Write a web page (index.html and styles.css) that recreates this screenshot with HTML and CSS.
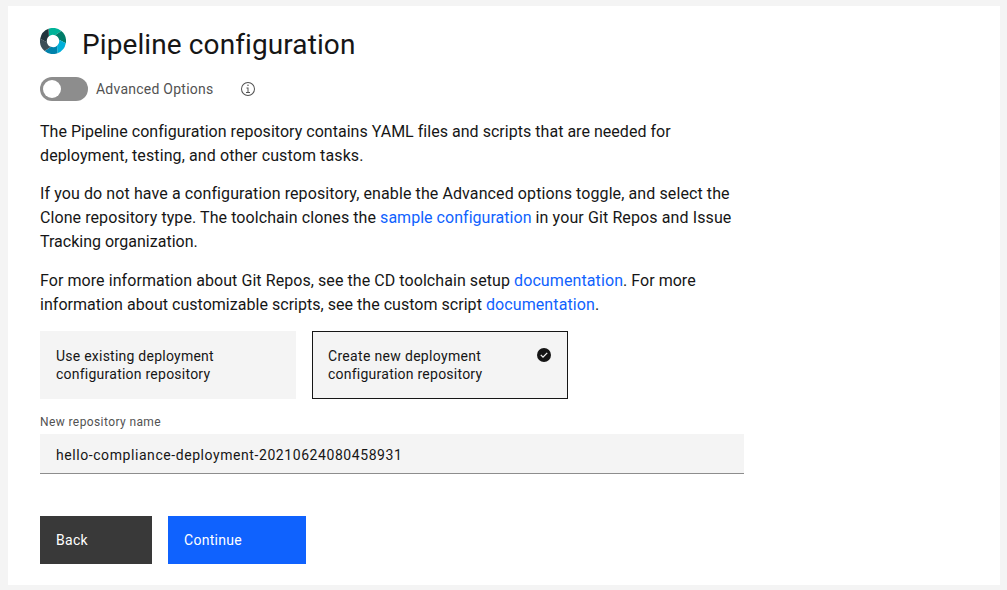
FILE: index.html
```
<!DOCTYPE html>
<html lang="en">
<head>
<meta charset="utf-8">
<title>Pipeline configuration</title>
<link rel="stylesheet" href="styles.css">
</head>
<body>
<main class="card">
  <header class="header">
    <svg class="logo" width="26" height="26" viewBox="-13 -13 26 26" aria-hidden="true">
      <path fill="#00b398" d="M-4.07-4.68L-4.45-12.22A13 13 0 0 1 8.36-9.96L2.02-5.86A6.2 6.2 0 0 0-4.07-4.68Z"/>
      <path fill="#007d69" d="M2.02-5.86L8.36-9.96A13 13 0 0 1 12.8 2.26L6.09-1.18A6.2 6.2 0 0 0 2.02-5.86Z"/>
      <path fill="#00b0da" d="M6.09-1.18L12.8 2.26A13 13 0 0 1 4.45 12.22L4.07 4.68A6.2 6.2 0 0 0 6.09-1.18Z"/>
      <path fill="#0082ab" d="M4.07 4.68L4.45 12.22A13 13 0 0 1-8.36 9.96L-2.02 5.86A6.2 6.2 0 0 0 4.07 4.68Z"/>
      <path fill="#3c4d56" d="M-2.02 5.86L-8.36 9.96A13 13 0 0 1-12.8-2.26L-6.09 1.18A6.2 6.2 0 0 0-2.02 5.86Z"/>
      <path fill="#22343d" d="M-6.09 1.18L-12.8-2.26A13 13 0 0 1-4.45-12.22L-4.07-4.68A6.2 6.2 0 0 0-6.09 1.18Z"/>
    </svg>
    <h1 class="title">Pipeline configuration</h1>
  </header>

  <div class="options">
    <button class="toggle" role="switch" aria-checked="false" aria-label="Advanced Options"><span class="knob"></span></button>
    <span class="options-label">Advanced Options</span>
    <svg class="info" width="16" height="16" viewBox="0 0 32 32" fill="#525252" aria-hidden="true">
      <path d="M17 22V13H13V15H15V22H12V24H20V22ZM16 7A1.5 1.5 0 1 0 17.5 8.5 1.5 1.5 0 0 0 16 7Z"/>
      <path d="M16 30A14 14 0 1 1 30 16 14 14 0 0 1 16 30ZM16 4A12 12 0 1 0 28 16 12 12 0 0 0 16 4Z"/>
    </svg>
  </div>

  <div class="copy">
    <p><span class="line ls-3">The Pipeline configuration repository contains YAML files and scripts that are needed for</span>
    <span class="line ls-11">deployment, testing, and other custom tasks.</span></p>
    <p><span class="line ls-10">If you do not have a configuration repository, enable the Advanced options toggle, and select the</span>
    <span class="line ls-8">Clone repository type. The toolchain clones the <a class="link ls-3" href="#">sample configuration</a><span class="ls-11"> in your Git Repos and Issue</span></span>
    <span class="line">Tracking organization.</span></p>
    <p><span class="line ls-7">For more information about Git Repos, see the CD toolchain setup <a class="link ls-10" href="#">documentation</a><span class="ls-3">. For more</span></span>
    <span class="line ls-3">information about customizable scripts, see the custom script <a class="link ls-10" href="#">documentation</a>.</span></p>
  </div>

  <div class="tiles">
    <div class="tile">Use existing deployment<br>configuration repository</div>
    <div class="tile selected"><span><span class="create">Create new deployment</span><br>configuration repository</span>
      <svg class="check" width="16" height="16" viewBox="0 0 16 16" aria-hidden="true">
        <circle cx="8" cy="8" r="7" fill="#161616"/>
        <path fill="#f4f4f4" d="M7 11L4.3 8.3 5.2 7.4 7 9.2 10.8 5.4 11.7 6.3Z"/>
      </svg>
    </div>
  </div>

  <label class="field-label" for="repo">New repository name</label>
  <input class="field" id="repo" type="text" value="hello-compliance-deployment-20210624080458931">

  <div class="actions">
    <button class="button back">Back</button>
    <button class="button continue">Continue</button>
  </div>
</main>
</body>
</html>
```

FILE: styles.css
```
* { box-sizing: border-box; }

body {
  margin: 0;
  padding: 6px 7px 5px 8px;
  height: 590px;
  background: #f4f4f4;
  color: #161616;
  font-family: Roboto, "Noto Sans", sans-serif;
  font-size: 16px;
  line-height: 24px;
}

.card {
  height: 579px;
  padding: 20px 32px 0;
  background: #fff;
}

.header { display: flex; gap: 16px; height: 51px; }
.logo { margin-top: 2px; }
.title { margin: 1px 0 0; font-size: 28px; font-weight: 400; line-height: 36px; letter-spacing: 0.1px; }

.options { display: flex; align-items: center; height: 24px; font-size: 14px; color: #525252; }
.toggle { width: 48px; height: 24px; padding: 3px; border: 0; border-radius: 12px; background: #8d8d8d; }
.knob { display: block; width: 18px; height: 18px; border-radius: 50%; background: #fff; }
.options-label { width: 152px; padding-left: 8px; letter-spacing: 0.24px; }
.info { flex: none; }

.copy { padding-top: 19px; }
.copy p { margin: 0 0 14px; }
.copy p:nth-child(2) { margin-bottom: 15px; }
.line { display: block; white-space: pre; }
.link { color: #0f62fe; text-decoration: none; }
.ls-3 { letter-spacing: 0.03px; }
.ls-7 { letter-spacing: 0.07px; }
.ls-8 { letter-spacing: 0.08px; }
.ls-10 { letter-spacing: 0.1px; }
.ls-11 { letter-spacing: 0.11px; }

.tiles { display: flex; gap: 16px; }
.tile {
  width: 256px;
  height: 68px;
  padding: 16px;
  background: #f4f4f4;
  font-size: 14px;
  line-height: 18px;
  letter-spacing: 0.24px;
}
.selected { display: flex; justify-content: space-between; padding: 15px; border: 1px solid #161616; }
.create { letter-spacing: 0.32px; }

.field-label { display: block; margin-top: 15px; padding-bottom: 4px; color: #525252; font-size: 12px; line-height: 16px; letter-spacing: 0.4px; }
.field {
  display: block;
  width: 704px;
  height: 40px;
  padding: 2px 16px 0;
  border: 0;
  border-bottom: 1px solid #8d8d8d;
  border-radius: 0;
  outline: 0;
  background: #f4f4f4;
  color: #161616;
  font: 14px Roboto, "Noto Sans", sans-serif;
  letter-spacing: 0.57px;
}

.actions { display: flex; gap: 16px; padding-top: 42px; }
.button {
  height: 48px;
  padding: 0 16px;
  border: 0;
  color: #fff;
  font: 14px Roboto, "Noto Sans", sans-serif;
  letter-spacing: 0.3px;
  text-align: left;
}
.back { width: 112px; background: #393939; }
.continue { width: 138px; background: #0f62fe; }
```
